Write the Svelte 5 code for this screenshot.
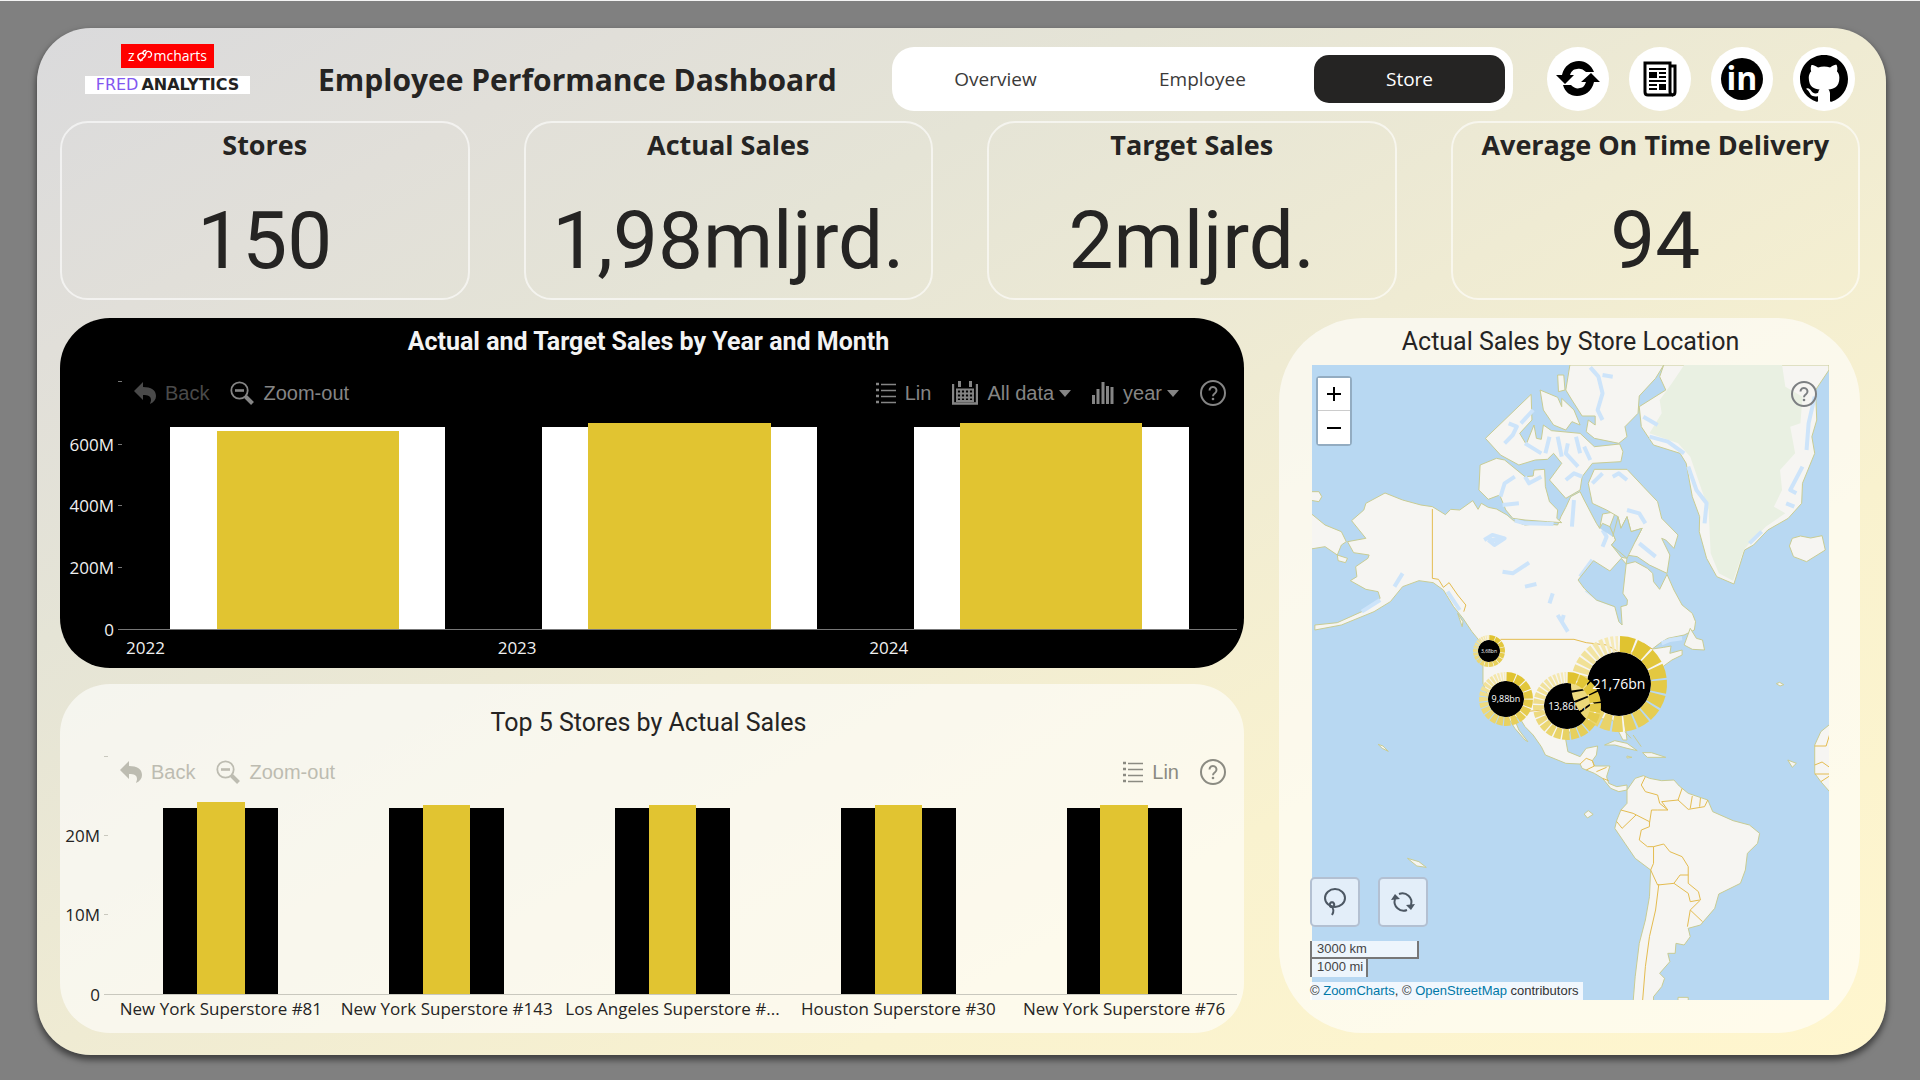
<script lang="ts">
	type Bar = { label: string; target: number; actual: number };
	type Pie = { x: number; y: number; inner: number; outer: number; label: string; size: number; slices: number };

	const tabs = ['Overview', 'Employee', 'Store'];
	let activeTab = $state('Store');

	const cards = [
		{ title: 'Stores', value: '150' },
		{ title: 'Actual Sales', value: '1,98mljrd.' },
		{ title: 'Target Sales', value: '2mljrd.' },
		{ title: 'Average On Time Delivery', value: '94' }
	];

	const yearMax = 805;
	const yearTicks = [0, 200, 400, 600, 805];
	const years: Bar[] = [
		{ label: '2022', target: 660, actual: 645 },
		{ label: '2023', target: 660, actual: 673 },
		{ label: '2024', target: 660, actual: 673 }
	];

	const storeMax = 30;
	const storeTicks = [0, 10, 20, 30];
	const stores: Bar[] = [
		{ label: 'New York Superstore #81', target: 23.6, actual: 24.3 },
		{ label: 'New York Superstore #143', target: 23.6, actual: 23.9 },
		{ label: 'Los Angeles Superstore #...', target: 23.6, actual: 23.9 },
		{ label: 'Houston Superstore #30', target: 23.6, actual: 23.9 },
		{ label: 'New York Superstore #76', target: 23.6, actual: 23.9 }
	];

	const pies: Pie[] = [
		{ x: 177, y: 286, inner: 11, outer: 16, label: '3,68bn', size: 5, slices: 22 },
		{ x: 194, y: 334, inner: 18, outer: 27, label: '9,88bn', size: 9, slices: 24 },
		{ x: 307, y: 319, inner: 32, outer: 48, label: '21,76bn', size: 14, slices: 26 },
		{ x: 255, y: 341, inner: 23, outer: 34, label: '13,86bn', size: 10, slices: 26 }
	];

	const tickLabel = (tick: number, max: number) => (tick === 0 ? '0' : tick === max ? '' : `${tick}M`);
	const percent = (value: number, max: number) => (value / max) * 100;

	// yellow fading to cream as the slices get smaller
	function shade(t: number) {
		const from = [224, 195, 48];
		const to = [247, 236, 190];
		return `rgb(${from.map((c, i) => Math.round(c + (to[i] - c) * t)).join(',')})`;
	}

	function ring(pie: Pie) {
		const weights = Array.from({ length: pie.slices }, (_, i) => 1.7 - (1.3 * i) / pie.slices);
		const total = weights.reduce((a, b) => a + b, 0);
		const gap = 0.045;
		let angle = -Math.PI / 2;
		return weights.map((weight, i) => {
			const start = angle + gap / 2;
			angle += (weight / total) * Math.PI * 2;
			const end = angle - gap / 2;
			const at = (r: number, a: number) => `${pie.x + r * Math.cos(a)} ${pie.y + r * Math.sin(a)}`;
			return {
				fill: shade(i / (pie.slices - 1)),
				d: `M${at(pie.inner, start)} L${at(pie.outer, start)} A${pie.outer} ${pie.outer} 0 0 1 ${at(pie.outer, end)} L${at(pie.inner, end)} A${pie.inner} ${pie.inner} 0 0 0 ${at(pie.inner, start)}z`
			};
		});
	}

	const land = [
		// north and central america
		'M257 549L300 570 345 585 373 590 405 614 418 598 440 600 472 572 485 598 493 580 510 592 530 597 556 615 572 632 600 645 640 640 680 645 688 620 700 592 712 560 735 545 745 570 775 640 783 655 790 612 822 605 808 650 822 690 812 705 836 742 850 745 848 762 870 755 900 775 913 790 915 815 930 838 948 793 965 840 985 885 1010 910 1018 935 1015 960 990 975 950 985 930 1000 912 1017 940 1012 958 1008 955 1030 985 1020 985 1035 960 1050 940 1068 920 1090 900 1130 880 1170 860 1200 845 1240 850 1290 840 1290 815 1230 780 1225 720 1240 700 1290 705 1325 735 1340 750 1315 778 1308 775 1335 765 1352 770 1368 808 1368 800 1400 805 1420 825 1430 850 1425 850 1440 830 1445 810 1435 790 1405 770 1390 740 1375 735 1362 700 1360 650 1335 640 1310 620 1275 600 1250 590 1230 570 1215 585 1260 607 1295 600 1290 575 1255 560 1225 540 1210 510 1160 497 1120 497 1060 500 1040 490 995 470 965 448 925 425 890 400 840 375 818 340 812 300 830 270 875 230 905 150 945 85 960 85 945 140 938 200 905 245 865 240 845 210 838 172 812 188 800 185 770 215 745 218 735 180 728 165 695 210 685 175 632 205 600 210 580z',
		// south america
		'M850 1440L870 1405 890 1397 905 1405 935 1412 965 1410 978 1428 1000 1450 1048 1470 1060 1505 1110 1532 1150 1545 1175 1570 1170 1600 1145 1630 1140 1680 1128 1720 1075 1752 1065 1795 1030 1845 1000 1855 1005 1880 990 1905 970 1900 968 1930 950 1930 955 1955 930 1990 942 2005 935 2030 915 2060 915 2075 865 2075 870 2000 880 1900 895 1830 905 1760 908 1680 870 1645 845 1600 820 1555 825 1530 835 1500 850 1480z',
		// arctic islands
		'M490 465L530 445 550 450 600 500 620 498 622 480 648 478 650 530 660 575 680 600 678 625 690 638 655 635 600 630 570 625 553 600 538 555 510 568 487 540z',
		'M503 385L615 253 617 330 587 370 603 403 622 345 628 385 640 388 645 345 665 362 735 370 770 410 832 402 840 425 835 455 765 460 740 500 735 540 700 565 660 510 690 460 670 430 655 448 625 450 585 465 540 435z',
		'M637 240L680 262 690 290 690 265 720 300 735 345 715 335 700 360 670 345 645 300z',
		'M710 165H940L920 205 880 258 877 310 845 350 850 380 830 400 770 385 750 365 755 330 772 345 772 318 740 318 715 270 700 240z',
		'M680 195L695 195 698 240 682 245z',
		'M770 478H850L890 530 925 575 935 625 975 675 965 715 945 690 935 685 955 735 948 790 905 765 875 740 848 735 850 700 870 695 887 655 860 665 850 620 835 655 828 620 800 600 765 580 755 520z',
		// greenland and iceland
		'M940 165H1345V180L1312 240 1315 330 1303 380 1310 430 1280 520 1278 580 1245 625 1195 660 1160 705 1138 720 1112 822 1070 800 1045 745 1027 665 1028 620 1010 560 995 460 980 430 915 405 885 350 880 290 945 240 930 200z',
		'M1255 685L1275 678 1300 684 1328 677 1336 720 1290 755 1258 740 1248 708z',
		// siberia
		'M70 605L110 645 150 665 162 695 150 705 140 735 110 710 70 718z',
		'M70 545L95 545 102 560 95 575 70 570z',
		'M140 735L165 745 160 758 142 752z',
		// newfoundland
		'M1005 955L1020 985 1035 990 1040 1020 1010 1018 990 1005z',
		// west africa
		'M1350 1240L1325 1265 1310 1305 1310 1390 1325 1415 1350 1450z',
		// caribbean and small islands
		'M795 1305L820 1292 850 1300 875 1322 850 1315 820 1305z',
		'M888 1328L910 1328 945 1342 900 1342z',
		'M850 1338L862 1342 850 1344z',
		'M845 1265L860 1285 M865 1275L885 1310',
		'M240 1303L252 1308 265 1324 250 1315z',
		'M745 1512L755 1502 767 1513 753 1524z',
		'M312 1645L340 1655 358 1672 335 1668z',
		'M1244 1350L1265 1360 1255 1372z',
		'M1216 1121L1224 1117 1234 1124 1225 1128z',
		'M975 2062H1000V2075H975z',
		'M435 910L448 935 446 950z'
	];

	const borders = [
		'M373 597V805L388 808 400 832 414 818 435 855 455 885 450 905',
		'M540 988H720L750 998 800 1005 850 1040 890 1000 912 1017',
		'M600 1205L640 1200 690 1250',
		'M735 1362L750 1345 765 1352 770 1368 750 1380 M775 1385L800 1372 M790 1405L805 1412',
		'M895 1400L885 1425 895 1445 925 1455 930 1480 950 1500 925 1500 910 1500 905 1540',
		'M835 1500L865 1510 905 1535 905 1550 885 1560 880 1590 900 1610 915 1610 940 1602 955 1625 985 1640 1000 1670V1720L1025 1745 1030 1770 1005 1800',
		'M915 1610V1660L908 1680 925 1725 965 1720 980 1695 1000 1695',
		'M965 1720L1000 1750 1005 1775 1028 1770 M998 1850L1005 1800 1035 1835',
		'M928 1722L920 1800 905 1880 895 1970 888 2075',
		'M985 1435L975 1470 1000 1498 1040 1490 1048 1470 M1010 1458L1005 1495 M1030 1464L1028 1490 M935 1475L950 1500 M935 1475L975 1470',
		'M825 1535L838 1555 872 1515',
		'M1310 1308H1338L1350 1260 M1310 1365L1328 1356 1350 1375 M1310 1392H1350 M1325 1415L1350 1395'
	];

	const shallows = [
		'M760 172L780 200 790 250 778 300 790 330 M790 195L815 200',
		'M545 540L550 520 575 500 M600 500L610 520 640 500 M545 585L585 580 M575 632L600 640 670 642 M545 540L540 560',
		'M700 510L720 490 740 500 M705 400L700 430 730 470 M660 380L650 430 M560 340L580 350 570 375 550 400 M620 300L590 340 M600 400L640 430 M745 410L760 450 M680 380L690 440 M725 380L735 430',
		'M765 520L790 490 M815 500L830 490 850 510 M850 600L880 610 895 640 M880 700L920 740',
		'M890 320L925 345 M905 380L950 395 990 430 M1000 470L1020 540 1045 580 1040 640',
		'M1310 260L1295 340 1290 420 M1280 470L1250 540 1265 550 M1240 580L1260 590 M1180 665L1150 700',
		'M790 660L800 680 790 710 M765 750L735 800 M750 840L780 868 820 885',
		'M500 690L520 675 550 685 525 705 510 690 M515 690H540 M545 785L570 790 610 758 M600 830L628 822 M668 850L660 880 M680 915L705 965 M695 915L690 935',
		'M300 790L280 830 M245 870L200 905 M410 845L440 900 M720 570L715 650 M935 1000L955 990 985 985'
	];
</script>

{#snippet helpIcon()}
	<svg viewBox="0 0 26 26" width="26" height="26" aria-hidden="true">
		<circle cx="13" cy="13" r="12" fill="none" stroke="currentColor" stroke-width="2" />
		<path d="M9.500 10.500a3.500 3.500 0 1 1 5.500 2.800c-1.400 1-2 1.500-2 3" fill="none" stroke="currentColor" stroke-width="2" />
		<circle cx="13" cy="19" r="1.300" fill="currentColor" />
	</svg>
{/snippet}

{#snippet backTools()}
	<button class="tool back" type="button">
		<svg viewBox="0 0 22 22" width="22" height="22" aria-hidden="true">
			<path d="M9 0L0 9l9 9v-5c5 0 8 1 8 5 0 1-.5 2-1 4 4-2 6-4.500 6-8 0-6-5-9-13-9z" fill="currentColor" />
		</svg>
		<span>Back</span>
	</button>
	<button class="tool zoom-out" type="button">
		<svg viewBox="0 0 24 24" width="24" height="24" aria-hidden="true">
			<circle cx="9.500" cy="9.500" r="8.200" fill="none" stroke="currentColor" stroke-width="1.800" />
			<path d="M5 9.500h9" stroke="currentColor" stroke-width="2.600" />
			<path d="M15.500 15.500l7 7" stroke="currentColor" stroke-width="4" />
		</svg>
		<span>Zoom-out</span>
	</button>
{/snippet}

{#snippet linTool()}
	<button class="tool lin" type="button">
		<svg viewBox="0 0 20 22" width="20" height="22" aria-hidden="true">
			<path d="M0 2h3M0 8h3M0 14h3M0 20h3" stroke="currentColor" stroke-width="2.500" />
			<path d="M5 2.500h15M5 8.500h15M5 14.500h15M5 20.500h15" stroke="currentColor" stroke-width="1.600" />
		</svg>
		<span>Lin</span>
	</button>
{/snippet}

{#snippet plot(bars: Bar[], ticks: number[], max: number)}
	<div class="axis">
		{#each ticks as tick}
			<span class="tick" style="bottom: {percent(tick, max)}%">{tickLabel(tick, max)}</span>
		{/each}
	</div>
	<div class="bars">
		{#each bars as bar}
			<div class="slot">
				<div class="bar target" style="height: {percent(bar.target, max)}%"></div>
				<div class="bar actual" style="height: {percent(bar.actual, max)}%"></div>
			</div>
		{/each}
	</div>
	<div class="labels">
		{#each bars as bar}
			<span>{bar.label}</span>
		{/each}
	</div>
{/snippet}

<main class="board">
	<header>
		<div class="logos">
			<div class="zoomcharts">
				z<svg viewBox="0 0 22 16" width="19" height="14" aria-hidden="true">
					<path d="M11 7a4 4 0 1 0-2 5.500M6 14c2-1 2-3 4-4s2-4 3-6 5-2 6 1-2 5-4 4M9 5c0-2 2-4 4-3" fill="none" stroke="#fff" stroke-width="1.600" />
				</svg>mcharts
			</div>
			<div class="analytics"><span>FRED</span><b>ANALYTICS</b></div>
		</div>
		<h1>Employee Performance Dashboard</h1>
		<nav>
			{#each tabs as tab}
				<button type="button" class:active={tab === activeTab} onclick={() => (activeTab = tab)}>{tab}</button>
			{/each}
		</nav>
		<div class="links">
			<button type="button" aria-label="Refresh">
				<svg viewBox="0 0 44 38" width="44" height="38">
					<path d="M6 15C8 6 15 1 23 1c7 0 12 4 15 11l-8 0c-3-3-6-4-9-3-4 0-6 3-7 6h4L9 24 0 15z" />
					<path d="M38 22c-2 9-9 14-17 14-7 0-12-4-14-11h8c3 3 6 4 9 3 3 0 5-3 6-6h-5l10-9 9 9z" />
				</svg>
			</button>
			<button type="button" aria-label="News">
				<svg viewBox="0 0 34 36" width="34" height="36" fill="none" stroke="#000">
					<path d="M2 2h25v29q0 3 3 3H5q-3 0-3-3z" stroke-width="3" />
					<path d="M27 5h5v26q0 3-3 3" stroke-width="3" />
					<path d="M6 8h17M16 12h7M16 16h7M6 20h17M6 24h8M6 28h8" stroke-width="2" />
					<path d="M6 11h8v6H6zM16 23h7v6h-7z" fill="#000" stroke="none" />
				</svg>
			</button>
			<a href="#linkedin" aria-label="LinkedIn">
				<svg viewBox="0 0 42 42" width="42" height="42">
					<circle cx="21" cy="21" r="21" />
					<text x="21" y="32" text-anchor="middle" fill="#fff">in</text>
				</svg>
			</a>
			<a href="#github" aria-label="GitHub">
				<svg viewBox="0 0 16 16" width="48" height="48">
					<path d="M8 0C3.580 0 0 3.580 0 8c0 3.540 2.290 6.530 5.470 7.590.4.070.55-.17.55-.38 0-.19-.01-.82-.01-1.490-2.010.37-2.530-.49-2.690-.94-.09-.23-.48-.94-.82-1.130-.28-.15-.68-.52-.01-.53.63-.01 1.080.58 1.230.82.72 1.210 1.870.87 2.330.66.07-.52.28-.87.51-1.070-1.780-.2-3.640-.89-3.640-3.950 0-.87.31-1.590.82-2.150-.08-.2-.36-1.020.08-2.120 0 0 .67-.21 2.200.82.64-.18 1.320-.27 2-.27.68 0 1.360.09 2 .27 1.530-1.040 2.200-.82 2.200-.82.44 1.100.16 1.920.08 2.120.51.56.82 1.270.82 2.150 0 3.070-1.870 3.750-3.650 3.950.29.25.54.73.54 1.480 0 1.070-.01 1.930-.01 2.200 0 .21.15.46.55.38A8.013 8.013 0 0 0 16 8c0-4.420-3.580-8-8-8z" />
				</svg>
			</a>
		</div>
	</header>

	<section class="cards">
		{#each cards as card}
			<article>
				<h2>{card.title}</h2>
				<p>{card.value}</p>
			</article>
		{/each}
	</section>

	<div class="content">
		<div class="charts">
			<section class="panel dark">
				<h3>Actual and Target Sales by Year and Month</h3>
				<div class="chart">
					{@render plot(years, yearTicks, yearMax)}
					<div class="toolbar">
						{@render backTools()}
						<span class="spacer"></span>
						{@render linTool()}
						<button class="tool" type="button">
							<svg viewBox="0 0 26 24" width="26" height="24" fill="none" stroke="currentColor" aria-hidden="true">
								<path d="M1 3v19.500h24V3" stroke-width="2.400" />
								<path d="M7.500 0v6M18.500 0v6" stroke-width="3" />
								<path d="M4 8.500h18M4 12.500h18M4 16.500h18M4 20h18M5 8v12M9 8v12M13 8v12M17 8v12M21 8v12" stroke-width="1.800" />
							</svg>
							<span>All data</span>
							<i class="caret"></i>
						</button>
						<button class="tool" type="button">
							<svg viewBox="0 0 22 22" width="22" height="22" aria-hidden="true">
								<path d="M1.500 22v-9M6 22V7M11 22V0M15.500 22V4M20 22V5" stroke="currentColor" stroke-width="3" />
							</svg>
							<span>year</span>
							<i class="caret"></i>
						</button>
						<button class="tool help" type="button" aria-label="Help">{@render helpIcon()}</button>
					</div>
				</div>
			</section>

			<section class="panel top-stores">
				<h3>Top 5 Stores by Actual Sales</h3>
				<div class="chart">
					{@render plot(stores, storeTicks, storeMax)}
					<div class="toolbar">
						{@render backTools()}
						<span class="spacer"></span>
						{@render linTool()}
						<button class="tool help" type="button" aria-label="Help">{@render helpIcon()}</button>
					</div>
				</div>
			</section>
		</div>

		<section class="panel location">
			<h3>Actual Sales by Store Location</h3>
			<div class="map">
				<svg class="world" viewBox="78 165 1267 1905" preserveAspectRatio="none" aria-hidden="true">
					{#each land as d}
						<path class="land" {d} />
					{/each}
					<path class="ice" d="M990 165H1230L1238 230 1280 260 1275 340 1250 350 1262 430 1225 480 1230 540 1210 590 1238 610 1190 650 1150 700 1136 720 1110 812 1075 790 1055 730 1050 600 1005 440 975 400 905 370 935 310 930 270 960 220z" />
					{#each shallows as d}
						<path class="shallow" {d} />
					{/each}
					<path class="water" d="M768 752L808 783 836 745 848 762 840 850 851 870 850 885 835 890 838 945 830 935 820 890 775 870 745 835 730 810z" />
					<path class="water" d="M783 655L790 640 808 650 822 690 812 705 850 745 870 695 887 655 860 665 850 620 835 655 828 620 815 680" />
					{#each borders as d}
						<path class="border" {d} />
					{/each}
				</svg>
				<svg class="pies" viewBox="0 0 517 635">
					{#each pies as pie}
						<circle cx={pie.x} cy={pie.y} r={pie.inner} />
					{/each}
					<text x="255" y="345" font-size="10">13,86bn</text>
					{#each pies as pie}
						{#each ring(pie) as slice}
							<path d={slice.d} fill={slice.fill} />
						{/each}
					{/each}
					{#each pies as pie}
						{#if pie.label !== '13,86bn'}
							<text x={pie.x} y={pie.y + Math.round(pie.size / 3)} font-size={pie.size}>{pie.label}</text>
						{/if}
					{/each}
				</svg>

				<div class="zoom">
					<button type="button" aria-label="Zoom in">
						<svg viewBox="0 0 16 16" width="16" height="16"><path d="M8 1v14M1 8h14" /></svg>
					</button>
					<button type="button" aria-label="Zoom out">
						<svg viewBox="0 0 16 16" width="16" height="16"><path d="M1 8h14" /></svg>
					</button>
				</div>
				<button class="tool help map-help" type="button" aria-label="Help">{@render helpIcon()}</button>

				<div class="map-footer">
					<div class="map-tools">
						<button type="button" aria-label="Lasso">
							<svg viewBox="0 0 24 28" width="24" height="28">
								<ellipse cx="12" cy="10" rx="10" ry="9" />
								<path d="M9 14c-3 1-3 5 0 5s3-4 0-5M8 18c3 2 3 6 1 9" />
							</svg>
						</button>
						<button type="button" aria-label="Reset">
							<svg viewBox="0 0 24 24" width="24" height="24">
								<path d="M8 4a9 9 0 0 1 12 11M16 20A9 9 0 0 1 4 9" />
								<path d="M24 14l-4 6-5-5zM0 10l4-6 5 5z" class="head" />
							</svg>
						</button>
					</div>
					<div class="scale km">3000 km</div>
					<div class="scale mi">1000 mi</div>
					<div class="credits">© <a href="#zoomcharts">ZoomCharts</a>, © <a href="#osm">OpenStreetMap</a> contributors</div>
				</div>
			</div>
		</section>
	</div>
</main>

<style>
	:global(body) {
		margin: 0;
		background: #808080;
	}

	:global(#app) {
		box-sizing: border-box;
		padding: 27px 34px 24px 37px;
		border-top: 1px solid #f4f4f4;
	}

	* {
		box-sizing: border-box;
	}

	h1,
	h2,
	h3,
	p {
		margin: 0;
	}

	button {
		margin: 0;
		padding: 0;
		border: none;
		background: none;
		font-family: inherit;
		cursor: pointer;
	}

	.board {
		padding: 16px 26px 22px 23px;
		border-radius: 54px;
		background: linear-gradient(to bottom right, #dadadc, #e1dfd9 16%, #e5e4d6 30%, #efebd3 50%, #f9f2cf 72%, #fff6ce);
		box-shadow: 0 4px 6px 1px rgba(0, 0, 0, 0.5);
		color: #252423;
		font-family: 'Open Sans', 'Noto Sans', sans-serif;
	}

	header {
		display: flex;
		align-items: flex-end;
		height: 67px;
		margin-bottom: 10px;
	}

	.logos {
		display: flex;
		flex-direction: column;
		align-items: center;
		align-self: flex-start;
		gap: 8px;
		width: 165px;
		margin: 0 68px 0 25px;
	}

	.zoomcharts {
		display: flex;
		align-items: center;
		justify-content: center;
		width: 93px;
		height: 24px;
		background: #ff0000;
		color: #fff;
		font-size: 14px;
		line-height: 24px;
	}

	.analytics {
		display: flex;
		align-items: center;
		justify-content: center;
		gap: 3px;
		width: 100%;
		height: 18px;
		background: #fff;
		color: #222;
		font-family: 'DejaVu Sans', sans-serif;
		font-size: 16px;
		line-height: 18px;
	}

	.analytics span {
		color: #8257f0;
	}

	h1 {
		font-size: 30px;
		line-height: 62px;
		white-space: nowrap;
	}

	nav {
		display: grid;
		grid-template-columns: repeat(3, 1fr);
		gap: 16px;
		width: 621px;
		height: 64px;
		margin-left: auto;
		padding: 8px;
		border-radius: 22px;
		background: #fff;
	}

	nav button {
		border-radius: 15px;
		color: #3b3a39;
		font-size: 19px;
	}

	nav button.active {
		background: #252423;
		color: #fff;
	}

	.links {
		display: flex;
		gap: 20px;
		margin: 0 5px 0 34px;
	}

	.links button,
	.links a {
		display: flex;
		align-items: center;
		justify-content: center;
		width: 62px;
		height: 64px;
		border-radius: 50%;
		background: #fff;
	}

	.links svg {
		overflow: visible;
	}

	.links text {
		font: bold 32px 'Open Sans', sans-serif;
	}

	.cards {
		display: grid;
		grid-template-columns: repeat(4, 1fr);
		gap: 54px;
		margin-bottom: 18px;
	}

	.cards article {
		height: 179px;
		padding-top: 6px;
		border: 2px solid rgba(255, 255, 255, 0.6);
		border-radius: 28px;
		text-align: center;
	}

	h2 {
		font-size: 27px;
		line-height: 32px;
	}

	.cards p {
		margin-top: 24px;
		font-family: Roboto, sans-serif;
		font-size: 80px;
		line-height: 112px;
	}

	.content {
		display: grid;
		grid-template-columns: 1184fr 581fr;
		gap: 35px;
	}

	.charts {
		display: flex;
		flex-direction: column;
		gap: 16px;
	}

	.panel {
		border-radius: 50px;
		background: rgba(255, 255, 255, 0.6);
	}

	h3 {
		font-family: Roboto, sans-serif;
		font-size: 25px;
		font-weight: 400;
		line-height: 48px;
		text-align: center;
	}

	.dark {
		--ink: #f0f0f0;
		--axis: #777;
		padding-right: 7px;
		background: #000;
	}

	.dark h3 {
		margin-bottom: 16px;
		color: #f3f3f3;
		font-weight: 700;
	}

	.top-stores {
		--ink: #252423;
		--axis: #c9c8be;
		padding: 15px 7px 0 0;
	}

	.top-stores h3 {
		margin-bottom: 10px;
	}

	.chart {
		display: grid;
		grid-template-columns: 62px 1fr;
		grid-template-rows: 248px 38px;
	}

	.top-stores .chart {
		grid-template-columns: 48px 1fr;
		grid-template-rows: 238px 38px;
	}

	.axis {
		position: relative;
	}

	.tick {
		position: absolute;
		right: 0;
		display: flex;
		align-items: center;
		gap: 4px;
		height: 24px;
		margin-bottom: -11px;
		color: var(--ink);
		font-size: 17px;
	}

	.tick::after {
		content: '';
		width: 4px;
		height: 1px;
		background: var(--axis);
	}

	.bars,
	.toolbar {
		grid-column: 2;
		grid-row: 1;
	}

	.bars {
		display: flex;
		border-bottom: 1px solid var(--axis);
	}

	.slot {
		display: grid;
		flex: 1;
		align-items: end;
		justify-items: center;
	}

	.bar {
		grid-area: 1 / 1;
		width: 74%;
		background: #fff;
	}

	.bar.actual {
		width: 49%;
		background: #e1c431;
	}

	.top-stores .target {
		width: 51%;
		background: #000;
	}

	.top-stores .actual {
		width: 21%;
	}

	.labels {
		display: flex;
		grid-column: 2;
		color: var(--ink);
		font-size: 17px;
		line-height: 36px;
	}

	.labels span {
		flex: 1;
		padding-left: 4px;
		white-space: nowrap;
	}

	.top-stores .labels {
		line-height: 28px;
	}

	.top-stores .labels span {
		padding: 0;
		text-align: center;
	}

	.toolbar {
		z-index: 1;
		display: flex;
		align-items: center;
		align-self: start;
		gap: 21px;
		height: 22px;
		padding: 0 11px 0 12px;
		font-family: 'Liberation Sans', Arial, sans-serif;
	}

	.top-stores .toolbar {
		height: 30px;
	}

	.spacer {
		flex: 1;
	}

	.tool {
		display: flex;
		align-items: center;
		gap: 9px;
		color: #858585;
		font-size: 20px;
		line-height: 22px;
	}

	.dark .back {
		color: #4a4a4a;
	}

	.top-stores .back,
	.top-stores .zoom-out {
		color: #bdbcb1;
	}

	.top-stores .lin,
	.top-stores .help {
		color: #8b8b82;
	}

	.caret {
		margin-left: -4px;
		border: 6px solid transparent;
		border-top: 7px solid currentColor;
		border-bottom: 0;
	}

	.location {
		display: flex;
		flex-direction: column;
		padding: 0 31px 33px 33px;
		border-radius: 84px;
	}

	.location h3 {
		margin-bottom: -1px;
	}

	.map {
		position: relative;
		flex: 1;
		background: #b8d8f2;
	}

	.world,
	.pies {
		position: absolute;
		width: 100%;
		height: 100%;
	}

	.world path {
		stroke-width: 1px;
		vector-effect: non-scaling-stroke;
	}

	.land {
		fill: #f6f5f2;
		stroke: #c8cc94;
	}

	.ice {
		fill: #e9f0e2;
	}

	.world .shallow {
		fill: none;
		stroke: #cde4fa;
		stroke-width: 4px;
		stroke-linejoin: round;
	}

	.water {
		fill: #b8d8f2;
		stroke: #c8cc94;
	}

	.border {
		fill: none;
		stroke: #e4bc50;
	}

	.pies text {
		fill: #fff;
		text-anchor: middle;
	}

	.zoom {
		position: absolute;
		top: 11px;
		left: 4px;
		border: 2px solid rgba(0, 0, 0, 0.2);
		border-radius: 4px;
	}

	.zoom button {
		display: flex;
		align-items: center;
		justify-content: center;
		width: 32px;
		height: 33px;
		background: #fff;
	}

	.zoom button:first-child {
		border-bottom: 1px solid #ccc;
	}

	.zoom path {
		stroke: #000;
		stroke-width: 2px;
	}

	.map-help {
		position: absolute;
		top: 16px;
		right: 12px;
		color: #7c7f82;
	}

	.map-footer {
		position: absolute;
		bottom: 0;
		left: -2px;
		color: #444;
		font-family: 'Liberation Sans', Arial, sans-serif;
		font-size: 13px;
	}

	.map-tools {
		display: flex;
		gap: 18px;
		margin-bottom: 14px;
	}

	.map-tools button {
		display: flex;
		align-items: center;
		justify-content: center;
		width: 50px;
		height: 50px;
		border: 2px solid #b3c0d2;
		border-radius: 5px;
		background: #e3eef9;
	}

	.map-tools svg {
		fill: none;
		stroke: #4c5763;
		stroke-width: 2px;
	}

	.map-tools .head {
		fill: #4c5763;
		stroke: none;
	}

	.scale {
		height: 18px;
		padding-left: 5px;
		border: 2px solid #777;
		border-top: none;
		background: rgba(255, 255, 255, 0.75);
		line-height: 16px;
	}

	.km {
		width: 109px;
	}

	.mi {
		width: 58px;
		border-bottom: none;
	}

	.credits {
		width: max-content;
		margin-top: 5px;
		padding-right: 5px;
		background: rgba(255, 255, 255, 0.8);
		color: #333;
		line-height: 18px;
	}

	.credits a {
		color: #0078a8;
		text-decoration: none;
	}
</style>
